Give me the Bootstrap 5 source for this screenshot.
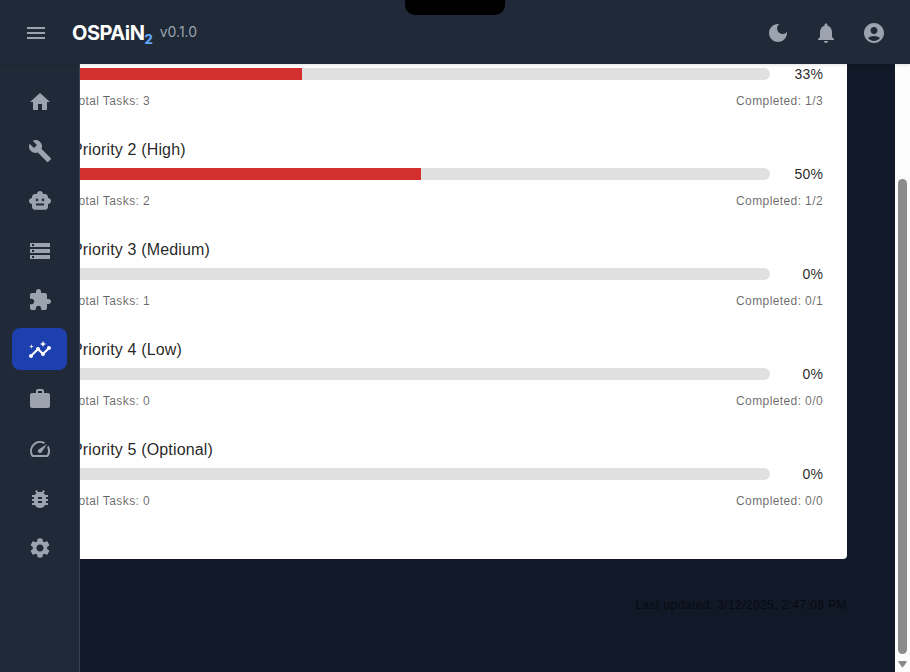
<!DOCTYPE html>
<html lang="en">
<head>
<meta charset="utf-8">
<meta name="viewport" content="width=device-width, initial-scale=1">
<title>OSPAiN2</title>
<link rel="stylesheet" href="https://cdn.jsdelivr.net/npm/bootstrap@5.3.0/dist/css/bootstrap.min.css">
<style>
body { background: #111827; font-family: "Liberation Sans", Arial, sans-serif; height: 100vh; }
svg { fill: currentColor; display: block; }
.topbar { height: 64px; background: #1f2937; color: #9ca3af; padding: 1px 24px 0; z-index: 3; box-shadow: 0 1px 3px rgba(0,0,0,.12); }
.brand { font: 700 20px/28px Inter, sans-serif; letter-spacing: -.5px; color: #fff; }
.brand-two { font-size: 13px; line-height: 14px; font-weight: 800; color: #60a5fa; margin-top: 13px; letter-spacing: 0; }
.version { font: 400 14px/20px Inter, sans-serif; margin-left: 7px; margin-top: -2px; }
.actions { gap: 24px; }
.notch { left: 405px; width: 100px; height: 15px; background: #000; border-radius: 0 0 10px 10px; z-index: 4; }
.side { width: 80px; background: #1f2937; border-right: 1px solid #374151; padding: 16px 12px; gap: 8px; z-index: 2; }
.side .nav-link { height: 41.6px; padding: 2px 0 0; color: #9ca3af; border-radius: 8px; }
.side .nav-link.active { background: #1e40af; color: #fff; }
.board { width: 799px; margin: -50px 0 0 -32px; height: 545px; padding: 24px; border-radius: 4px; color: rgba(0,0,0,.87); border: 0; }
.prio { height: 100px; flex-shrink: 0; }
.prio-name { font-size: 16px; line-height: 24px; letter-spacing: .15px; }
.meter-row { margin-top: 2px; }
.meter { height: 12px; border-radius: 6px; background: #e0e0e0; }
.meter .progress-bar { background: #d32f2f; }
.pct { width: 53px; font-size: 14px; line-height: 20px; letter-spacing: .15px; }
.caption { font-size: 12px; line-height: 20px; letter-spacing: .4px; color: rgba(0,0,0,.6); margin-top: 7px; }
.updated { width: 767px; font-size: 12px; line-height: 20px; letter-spacing: .4px; color: rgba(0,0,0,.6); margin-top: 36px; }
.scroller { width: 15px; background: #fcfcfc; padding: 115px 0 4px; }
.thumb { width: 9px; background: #8b8b8b; border-radius: 5px; }
.arrow { margin-top: 7px; }
</style>
<script src="https://cdn.jsdelivr.net/npm/bootstrap@5.3.0/dist/js/bootstrap.bundle.min.js"></script>
</head>
<body class="d-flex flex-column overflow-hidden">
<div class="notch position-absolute top-0"></div>
<header class="topbar d-flex align-items-center flex-shrink-0 position-relative">
  <svg width="24" height="24" viewBox="0 0 24 24"><path d="M3 18h18v-2H3v2zm0-5h18v-2H3v2zm0-7v2h18V6H3z"/></svg>
  <div class="brand d-flex ms-4"><span>OSPAiN</span><span class="brand-two">2</span></div>
  <span class="version">v0.1.0</span>
  <div class="actions d-flex ms-auto">
    <svg width="24" height="24" viewBox="0 0 24 24"><path d="M12 3c-4.97 0-9 4.03-9 9s4.03 9 9 9 9-4.03 9-9c0-.46-.04-.92-.1-1.36-.98 1.37-2.58 2.26-4.4 2.26-2.98 0-5.4-2.42-5.4-5.4 0-1.81.89-3.42 2.26-4.4-.44-.06-.9-.1-1.36-.1z"/></svg>
    <svg width="24" height="24" viewBox="0 0 24 24"><path d="M12 22c1.1 0 2-.9 2-2h-4c0 1.1.89 2 2 2zm6-6v-5c0-3.07-1.64-5.64-4.5-6.32V4c0-.83-.67-1.5-1.5-1.5s-1.5.67-1.5 1.5v.68C7.63 5.36 6 7.92 6 11v5l-2 2v1h16v-1l-2-2z"/></svg>
    <svg width="24" height="24" viewBox="0 0 24 24"><path d="M12 2C6.48 2 2 6.48 2 12s4.48 10 10 10 10-4.48 10-10S17.52 2 12 2zm0 4c1.93 0 3.5 1.57 3.5 3.5S13.93 13 12 13s-3.5-1.57-3.5-3.5S10.07 6 12 6zm0 14c-2.03 0-4.43-.82-6.14-2.88C7.55 15.8 9.68 15 12 15s4.45.8 6.14 2.12C16.43 19.18 14.03 20 12 20z"/></svg>
  </div>
</header>
<div class="d-flex flex-grow-1 overflow-hidden">
  <nav class="side nav flex-column flex-nowrap flex-shrink-0 position-relative">
    <a class="nav-link d-flex align-items-center justify-content-center" href="#" aria-label="Home"><svg width="24" height="24" viewBox="0 0 24 24"><path d="M10 20v-6h4v6h5v-8h3L12 3 2 12h3v8z"/></svg></a>
    <a class="nav-link d-flex align-items-center justify-content-center" href="#" aria-label="Tools"><svg width="24" height="24" viewBox="0 0 24 24"><path d="M22.7 19l-9.1-9.1c.9-2.3.4-5-1.5-6.9-2-2-5-2.4-7.4-1.3L9 6 6 9 1.6 4.7C.4 7.1.9 10.1 2.9 12.1c1.9 1.9 4.6 2.4 6.9 1.5l9.1 9.1c.4.4 1 .4 1.4 0l2.3-2.3c.5-.4.5-1.1.1-1.4z"/></svg></a>
    <a class="nav-link d-flex align-items-center justify-content-center" href="#" aria-label="Agents"><svg width="24" height="24" viewBox="0 0 24 24"><path fill-rule="evenodd" d="M17 5h-2c0-1.66-1.34-3-3-3S9 3.340 9 5H7C5.340 5 4 6.340 4 8v1c-1.660 0-3 1.340-3 3s1.340 3 3 3v3c0 1.500 1.340 2.700 3 2.700h10c1.660 0 3-1.200 3-2.700v-3c1.660 0 3-1.340 3-3s-1.340-3-3-3V8c0-1.660-1.340-3-3-3zM9 9.600a1.300 1.300 0 1 1 0 2.600 1.300 1.300 0 0 1 0-2.600zm6 0a1.300 1.300 0 1 1 0 2.600 1.300 1.300 0 0 1 0-2.600zM8 14.600h8v2H8v-2z"/></svg></a>
    <a class="nav-link d-flex align-items-center justify-content-center" href="#" aria-label="Storage"><svg width="24" height="24" viewBox="0 0 24 24"><path d="M2 20h20v-4H2v4zm2-3h2v2H4v-2zM2 4v4h20V4H2zm4 3H4V5h2v2zm-4 7h20v-4H2v4zm2-3h2v2H4v-2z"/></svg></a>
    <a class="nav-link d-flex align-items-center justify-content-center" href="#" aria-label="Extensions"><svg width="24" height="24" viewBox="0 0 24 24"><path d="M20.5 11H19V7c0-1.1-.9-2-2-2h-4V3.5C13 2.12 11.88 1 10.5 1S8 2.12 8 3.5V5H4c-1.1 0-1.99.9-1.99 2v3.8H3.5c1.49 0 2.7 1.21 2.7 2.7s-1.21 2.7-2.7 2.7H2V20c0 1.1.9 2 2 2h3.8v-1.5c0-1.49 1.21-2.7 2.7-2.7 1.49 0 2.7 1.21 2.7 2.7V22H17c1.1 0 2-.9 2-2v-4h1.5c1.38 0 2.5-1.12 2.5-2.5S21.88 11 20.5 11z"/></svg></a>
    <a class="nav-link active d-flex align-items-center justify-content-center" href="#" aria-label="Insights"><svg width="24" height="24" viewBox="0 0 24 24"><path d="M21 8c-1.45 0-2.26 1.44-1.93 2.51l-3.55 3.56c-.3-.09-.74-.09-1.04 0l-2.55-2.55C12.27 10.45 11.46 9 10 9c-1.45 0-2.27 1.44-1.93 2.52l-4.56 4.55C2.44 15.74 1 16.55 1 18c0 1.1.9 2 2 2 1.45 0 2.26-1.44 1.93-2.51l4.55-4.56c.3.09.74.09 1.04 0l2.55 2.55C12.73 16.55 13.54 18 15 18c1.45 0 2.27-1.44 1.93-2.52l3.56-3.55c1.07.33 2.51-.48 2.51-1.93 0-1.1-.9-2-2-2z"/><path d="M15 9l.94-2.07L18 6l-2.06-.93L15 3l-.92 2.07L12 6l2.08.93zM3.5 11L4 9l2-.5L4 8l-.5-2L3 8l-2 .5L3 9z"/></svg></a>
    <a class="nav-link d-flex align-items-center justify-content-center" href="#" aria-label="Work"><svg width="24" height="24" viewBox="0 0 24 24"><path d="M20 6h-4V4c0-1.11-.89-2-2-2h-4c-1.11 0-2 .89-2 2v2H4c-1.11 0-1.99.89-1.99 2L2 19c0 1.11.89 2 2 2h16c1.11 0 2-.89 2-2V8c0-1.11-.89-2-2-2zm-6 0h-4V4h4v2z"/></svg></a>
    <a class="nav-link d-flex align-items-center justify-content-center" href="#" aria-label="Performance"><svg width="24" height="24" viewBox="0 0 24 24"><path d="M20.38 8.57l-1.23 1.85a8 8 0 0 1-.22 7.58H5.07A8 8 0 0 1 15.58 6.85l1.85-1.23A10 10 0 0 0 3.35 19a2 2 0 0 0 1.72 1h13.85a2 2 0 0 0 1.74-1 10 10 0 0 0-.27-10.44zm-9.79 6.84a2 2 0 0 0 2.83 0l5.66-8.49-8.49 5.66a2 2 0 0 0 0 2.83z"/></svg></a>
    <a class="nav-link d-flex align-items-center justify-content-center" href="#" aria-label="Debug"><svg width="24" height="24" viewBox="0 0 24 24"><path d="M20 8h-2.81c-.45-.78-1.07-1.45-1.82-1.96L17 4.41 15.59 3l-2.17 2.17C12.96 5.06 12.49 5 12 5c-.49 0-.96.06-1.41.17L8.41 3 7 4.41l1.62 1.63C7.88 6.55 7.26 7.22 6.81 8H4v2h2.09c-.05.33-.09.66-.09 1v1H4v2h2v1c0 .34.04.67.09 1H4v2h2.81c1.04 1.79 2.97 3 5.19 3s4.15-1.21 5.19-3H20v-2h-2.09c.05-.33.09-.66.09-1v-1h2v-2h-2v-1c0-.34-.04-.67-.09-1H20V8zm-6 8h-4v-2h4v2zm0-4h-4v-2h4v2z"/></svg></a>
    <a class="nav-link d-flex align-items-center justify-content-center" href="#" aria-label="Settings"><svg width="24" height="24" viewBox="0 0 24 24"><path d="M19.14 12.94c.04-.3.06-.61.06-.94 0-.32-.02-.64-.07-.94l2.03-1.58c.18-.14.23-.41.12-.61l-1.92-3.32c-.12-.22-.37-.29-.59-.22l-2.39.96c-.5-.38-1.03-.7-1.62-.94l-.36-2.54c-.04-.24-.24-.41-.48-.41h-3.84c-.24 0-.43.17-.47.41l-.36 2.54c-.59.24-1.13.57-1.62.94l-2.39-.96c-.22-.08-.47 0-.59.22L2.74 8.87c-.12.21-.08.47.12.61l2.03 1.58c-.05.3-.09.63-.09.94s.02.64.07.94l-2.03 1.58c-.18.14-.23.41-.12.61l1.92 3.32c.12.22.37.29.59.22l2.39-.96c.5.38 1.03.7 1.62.94l.36 2.54c.05.24.24.41.48.41h3.84c.24 0 .44-.17.47-.41l.36-2.54c.59-.24 1.13-.56 1.62-.94l2.39.96c.22.08.47 0 .59-.22l1.92-3.32c.12-.22.07-.47-.12-.61l-2.01-1.58zM12 15.6c-1.98 0-3.6-1.62-3.6-3.6s1.62-3.6 3.6-3.6 3.6 1.62 3.6 3.6-1.62 3.6-3.6 3.6z"/></svg></a>
  </nav>
  <main class="flex-grow-1 overflow-hidden">
    <section class="board card">
      <div class="prio">
        <div class="prio-name">Priority 1 (Critical)</div>
        <div class="meter-row d-flex align-items-center"><div class="progress meter flex-grow-1"><div class="progress-bar" style="width:33%"></div></div><div class="pct text-end">33%</div></div>
        <div class="caption d-flex justify-content-between"><span>Total Tasks: 3</span><span>Completed: 1/3</span></div>
      </div>
      <div class="prio">
        <div class="prio-name">Priority 2 (High)</div>
        <div class="meter-row d-flex align-items-center"><div class="progress meter flex-grow-1"><div class="progress-bar" style="width:50%"></div></div><div class="pct text-end">50%</div></div>
        <div class="caption d-flex justify-content-between"><span>Total Tasks: 2</span><span>Completed: 1/2</span></div>
      </div>
      <div class="prio">
        <div class="prio-name">Priority 3 (Medium)</div>
        <div class="meter-row d-flex align-items-center"><div class="progress meter flex-grow-1"></div><div class="pct text-end">0%</div></div>
        <div class="caption d-flex justify-content-between"><span>Total Tasks: 1</span><span>Completed: 0/1</span></div>
      </div>
      <div class="prio">
        <div class="prio-name">Priority 4 (Low)</div>
        <div class="meter-row d-flex align-items-center"><div class="progress meter flex-grow-1"></div><div class="pct text-end">0%</div></div>
        <div class="caption d-flex justify-content-between"><span>Total Tasks: 0</span><span>Completed: 0/0</span></div>
      </div>
      <div class="prio">
        <div class="prio-name">Priority 5 (Optional)</div>
        <div class="meter-row d-flex align-items-center"><div class="progress meter flex-grow-1"></div><div class="pct text-end">0%</div></div>
        <div class="caption d-flex justify-content-between"><span>Total Tasks: 0</span><span>Completed: 0/0</span></div>
      </div>
    </section>
    <div class="updated text-end">Last updated: 3/12/2025, 2:47:08 PM</div>
  </main>
  <div class="scroller d-flex flex-column align-items-center flex-shrink-0">
    <div class="thumb flex-grow-1"></div>
    <svg class="arrow" width="9" height="7" viewBox="0 0 9 7" color="#8b8b8b"><path d="M.8 0h7.4q.8.2.5 1L5.2 6q-.7.8-1.4 0L.3 1Q0 .2.8 0z"/></svg>
  </div>
</div>
</body>
</html>
